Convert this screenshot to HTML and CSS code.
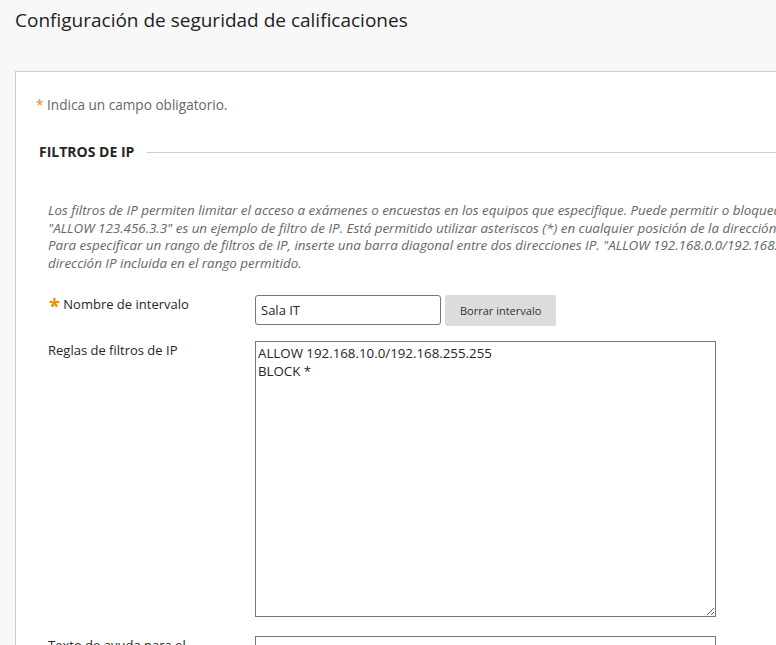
FILE: index.html
```html
<!DOCTYPE html>
<html lang="es">

<head>
    <meta charset="UTF-8">
    <meta name="viewport" content="width=device-width, initial-scale=1.0">
    <title>Configuración de seguridad de calificaciones</title>
    <link rel="stylesheet" href="styles.css">
</head>

<body>
    <h1 class="page-title">Configuración de seguridad de calificaciones</h1>

    <div class="panel">
        <p class="required-note"><span class="req">*</span> Indica un campo obligatorio.</p>

        <div class="section-head">
            <h2>FILTROS DE IP</h2>
        </div>

        <p class="instructions">
            Los filtros de IP permiten limitar el acceso a exámenes o encuestas en los equipos que especifique. Puede permitir o bloquear el acceso a determinados equipos.<br>
            "ALLOW 123.456.3.3" es un ejemplo de filtro de IP. Está permitido utilizar asteriscos (*) en cualquier posición de la dirección IP para indicar cualquier valor.<br>
            Para especificar un rango de filtros de IP, inserte una barra diagonal entre dos direcciones IP. "ALLOW 192.168.0.0/192.168.255.255" permitirá cualquier<br>
            dirección IP incluida en el rango permitido.
        </p>

        <div class="field-row">
            <label class="field-label" for="range-name"><span class="req-big">*</span> Nombre de intervalo</label>
            <div class="field-input">
                <input type="text" id="range-name" class="text-input" value="Sala IT">
                <button class="btn-clear" type="button">Borrar intervalo</button>
            </div>
        </div>

        <div class="field-row">
            <label class="field-label" for="rules">Reglas de filtros de IP</label>
            <div class="field-input">
                <textarea id="rules" class="rules-box">ALLOW 192.168.10.0/192.168.255.255
BLOCK *</textarea>
            </div>
        </div>

        <div class="field-row">
            <label class="field-label" for="help">Texto de ayuda para el usuario</label>
            <div class="field-input">
                <textarea id="help" class="rules-box"></textarea>
            </div>
        </div>
    </div>
</body>

</html>
```

FILE: styles.css
```css
html,
body {
    overflow: hidden;
}

body {
    margin: 0;
    background: #f8f8f8;
    font-family: "Open Sans", "Noto Sans", sans-serif;
    color: #262626;
}

.page-title {
    margin: 0;
    padding: 7px 15px 0;
    font-size: 19px;
    font-weight: 400;
    line-height: 26px;
    color: #222;
}

.panel {
    width: 1000px;
    margin: 38px 0 0 15px;
    background: #fff;
    border: 1px solid #cdcdcd;
    padding: 24px 0 40px 20px;
}

.required-note {
    margin: 0;
    font-size: 13.6px;
    line-height: 18px;
    color: #666;
}

.req {
    color: #f08c00;
}

.section-head {
    display: flex;
    align-items: center;
    gap: 13px;
    margin: 29px 0 0 3px;
}

.section-head h2 {
    margin: 0;
    font-size: 14px;
    font-weight: 700;
    line-height: 18px;
    color: #262626;
}

.section-head::after {
    content: "";
    flex: 1;
    border-top: 1px solid #cdcdcd;
}

.instructions {
    margin: 41px 0 0 12px;
    font-size: 13.4px;
    font-style: italic;
    line-height: 17.6px;
    color: #666;
    white-space: nowrap;
}

.field-row {
    display: flex;
    margin-top: 23px;
    margin-left: 12px;
}

.field-row + .field-row {
    margin-top: 15px;
}

.field-row:last-child {
    margin-top: 19px;
}

.field-label {
    width: 180px;
    margin-right: 27px;
    font-size: 13px;
    line-height: 18px;
    color: #262626;
}

.req-big {
    color: #f08c00;
    font-size: 20px;
    font-weight: 700;
    line-height: 13px;
    vertical-align: -4px;
    margin-left: 1px;
}

.field-input {
    display: flex;
    align-items: flex-start;
    gap: 4px;
}

.text-input {
    width: 186px;
    height: 30px;
    box-sizing: border-box;
    border: 1px solid #777;
    border-radius: 3px;
    padding: 0 5px;
    font-family: "Open Sans", "Noto Sans", sans-serif;
    font-size: 13px;
    color: #262626;
}

.btn-clear {
    height: 31px;
    padding: 0 15px;
    border: none;
    border-radius: 2px;
    background: #dcdcdc;
    font-family: "Open Sans", "Noto Sans", sans-serif;
    font-size: 11px;
    color: #333;
}

.rules-box {
    display: block;
    width: 461px;
    height: 276px;
    box-sizing: border-box;
    border: 1px solid #777;
    padding: 2px 2px;
    font-family: "Open Sans", "Noto Sans", sans-serif;
    font-size: 13.3px;
    line-height: 18px;
    color: #262626;
}
```
